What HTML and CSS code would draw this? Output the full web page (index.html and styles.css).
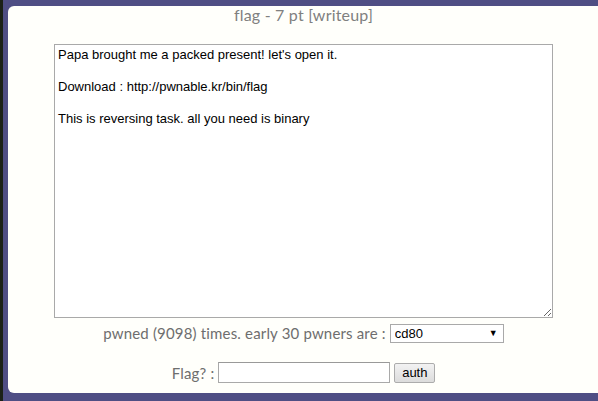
FILE: index.html
```html
<!DOCTYPE html>
<html lang="en">

<head>
    <meta charset="UTF-8">
    <meta name="viewport" content="width=device-width, initial-scale=1.0">
    <title>flag</title>
    <link rel="stylesheet" href="styles.css">
</head>

<body>
    <div class="panel">
        <div class="title">flag - 7 pt <span class="writeup">[writeup]</span></div>
        <textarea class="desc" readonly>Papa brought me a packed present! let's open it.

Download : http://pwnable.kr/bin/flag

This is reversing task. all you need is binary
</textarea>
        <div class="row pwners">
            <span>pwned (9098) times. early 30 pwners are :</span>
            <div class="select_wrap">
                <select class="pwner_list">
                    <option>cd80</option>
                </select>
            </div>
        </div>
        <div class="row flag_row">
            <span>Flag? :</span>
            <input type="text" class="flag_input">
            <button class="auth_btn">auth</button>
        </div>
    </div>
</body>

</html>
```

FILE: styles.css
```css
html, body {
    height: 100%;
}

body {
    margin: 0;
    padding: 6px 0 8px 5px;
    box-sizing: border-box;
    background-color: #4f4e84;
    border-left: 3px solid #1b2117;
    overflow: hidden;
}

.panel {
    height: 387px;
    width: 591px;
    background-color: #fffffb;
    border-radius: 6px 0 0 6px;
    display: flex;
    flex-direction: column;
    align-items: center;
    font-family: Lato, "Open Sans", sans-serif;
    color: #777;
}

.title {
    margin-top: 0;
    font-size: 16px;
    line-height: 18px;
    letter-spacing: 0.2px;
    color: #808080;
}

.desc {
    margin-top: 20px;
    width: 499px;
    height: 274px;
    box-sizing: border-box;
    border: 1px solid #a9a9a9;
    padding: 2px 3px;
    font-family: "Liberation Sans", Arial, sans-serif;
    font-size: 13px;
    line-height: 16px;
    color: #000;
    background: #fff;
    resize: both;
    outline: none;
}

.row {
    display: flex;
    align-items: center;
    gap: 4px;
    font-size: 15px;
    letter-spacing: 0.17px;
    color: #6e6e6e;
}

.pwners {
    margin-top: 5px;
    height: 19px;
}

.select_wrap {
    position: relative;
}

.select_wrap::after {
    content: "\25BC";
    position: absolute;
    right: 6px;
    top: 4px;
    font-size: 9px;
    color: #000;
    pointer-events: none;
}

.pwner_list {
    appearance: none;
    -webkit-appearance: none;
    width: 114px;
    height: 19px;
    box-sizing: border-box;
    border: 1px solid #a9a9a9;
    border-radius: 0;
    padding: 0 4px;
    background: #fff;
    font-family: "Liberation Sans", Arial, sans-serif;
    font-size: 13px;
    color: #000;
}

.flag_row {
    margin-top: 20px;
    height: 21px;
}

.flag_input {
    width: 172px;
    height: 21px;
    box-sizing: border-box;
    border: 1px solid #a9a9a9;
    border-top-color: #999;
    padding: 1px 3px;
    background: #fff;
    font-family: "Liberation Sans", Arial, sans-serif;
    font-size: 13px;
}

.auth_btn {
    width: 41px;
    height: 20px;
    box-sizing: border-box;
    border: 1px solid #acacac;
    border-radius: 2px;
    background: linear-gradient(#f2f2f2, #dcdcdc);
    padding: 0;
    font-family: "Liberation Sans", Arial, sans-serif;
    font-size: 13px;
    letter-spacing: 0;
    color: #000;
}
```
